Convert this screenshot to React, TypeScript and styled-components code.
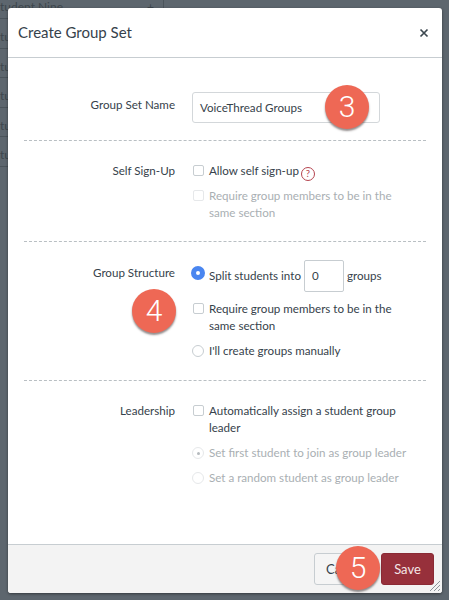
import React from "react";
import styled, { createGlobalStyle } from "styled-components";

const GlobalStyle = createGlobalStyle`
  html, body {
    margin: 0;
    padding: 0;
    background: #5d666e;
  }
  body {
    font-family: Lato, "Open Sans", sans-serif;
    color: #36424b;
  }
`;

const Page = styled.div`
  position: relative;
  width: 449px;
  height: 600px;
  overflow: hidden;
  background: #5d666e;
`;

const BackRow = styled.div`
  height: 29.5px;
  box-sizing: border-box;
  width: 100%;
  border-bottom: 1px solid #4b545b;
  color: #3d464d;
  font-size: 12px;
  line-height: 14px;
  padding-top: 11px;
  white-space: nowrap;
  overflow: hidden;
`;

const FirstBackRow = styled(BackRow)`
  height: 19px;
  padding: 0 9px 0 0;
  display: flex;
  justify-content: space-between;
`;

const BackTable = styled.div`
  width: 163px;
  height: 190px;
  border-right: 1px solid #4b545b;
`;

const Dialog = styled.div`
  position: absolute;
  left: 8px;
  top: 8px;
  width: 434px;
  height: 585px;
  display: flex;
  flex-direction: column;
  background: #ffffff;
  border-radius: 3px;
  box-shadow: 0 1px 3px rgba(0, 0, 0, 0.45);
`;

const Header = styled.div`
  height: 50px;
  flex: none;
  display: flex;
  align-items: center;
  justify-content: space-between;
  box-sizing: border-box;
  padding: 0 13px 2px 10px;
  border-bottom: 1px solid #c7cdd1;
`;

const Title = styled.h1`
  margin: 0;
  font-size: 15px;
  font-weight: 400;
  color: #36424b;
`;

const CloseGlyph = styled.svg`
  margin-top: 2px;
`;

const Body = styled.div`
  flex: 1;
  padding: 34px 16px 0;
`;

const Section = styled.div<{ $height: number }>`
  display: grid;
  grid-template-columns: 151px 1fr;
  column-gap: 16px;
  height: ${({ $height }) => $height}px;
  box-sizing: border-box;
  border-bottom: 1px dashed #b9bfc3;
  align-content: start;
`;

const LastSection = styled(Section)`
  border-bottom: none;
`;

const Label = styled.div<{ $top: number }>`
  text-align: right;
  font-size: 11.6px;
  line-height: 16px;
  padding-top: ${({ $top }) => $top}px;
  color: #36424b;
`;

const Controls = styled.div<{ $top: number }>`
  display: flex;
  flex-direction: column;
  padding-top: ${({ $top }) => $top}px;
`;

const Option = styled.div<{ $gap?: number; $disabled?: boolean }>`
  display: flex;
  align-items: flex-start;
  margin-top: ${({ $gap }) => $gap ?? 0}px;
  font-size: 11.6px;
  line-height: 16.5px;
  color: ${({ $disabled }) => ($disabled ? "#a9afb3" : "#36424b")};
`;

const OptionText = styled.div`
  margin-left: 5px;
  width: 198px;
`;

const WideOptionText = styled(OptionText)`
  width: 216px;
`;

const Box = styled.span<{ $disabled?: boolean }>`
  flex: none;
  width: 9px;
  height: 9px;
  margin: 2px 0 0 2px;
  border: 1px solid ${({ $disabled }) => ($disabled ? "#e6e8ea" : "#c7cdd1")};
  border-radius: 2px;
  background: #fff;
`;

const Radio = styled.span<{ $disabled?: boolean }>`
  flex: none;
  width: 10px;
  height: 10px;
  margin: 2px 0 0 1px;
  border: 1px solid ${({ $disabled }) => ($disabled ? "#e6e8ea" : "#c7cdd1")};
  border-radius: 50%;
  background: #fff;
  display: flex;
  align-items: center;
  justify-content: center;
`;

const RadioOn = styled.span`
  display: block;
  flex: none;
  box-sizing: border-box;
  width: 14px;
  height: 14px;
  margin: -7px 0 0 0;
  border: 5px solid #4a86f0;
  border-radius: 50%;
  background: #fff;
`;

const Dot = styled.span`
  width: 3px;
  height: 3px;
  border-radius: 50%;
  background: #b5babe;
`;

const NameInput = styled.div`
  width: 188px;
  height: 31px;
  box-sizing: border-box;
  border: 1px solid #d3d7da;
  border-radius: 3px;
  padding-left: 7px;
  font-size: 11.6px;
  line-height: 29px;
  margin-left: 1px;
`;

const CountInput = styled.span`
  display: block;
  width: 40px;
  height: 32px;
  box-sizing: border-box;
  border: 1px solid #c7cdd1;
  border-radius: 2px;
  padding-left: 7px;
  margin: 0 3px 0 3px;
  line-height: 30px;
`;

const SplitRow = styled.div`
  display: flex;
  align-items: center;
  font-size: 11.6px;
  line-height: 14px;
`;

const SplitText = styled.span`
  margin-left: 4px;
`;

const Help = styled.span`
  display: inline-flex;
  align-items: center;
  justify-content: center;
  width: 12px;
  height: 12px;
  margin-left: 2px;
  border: 1px solid #b5444f;
  border-radius: 50%;
  color: #b5444f;
  font-size: 9.5px;
  line-height: 12px;
  vertical-align: -2px;
`;

const Footer = styled.div`
  height: 49px;
  flex: none;
  position: relative;
  display: flex;
  justify-content: flex-end;
  align-items: center;
  gap: 8px;
  box-sizing: border-box;
  padding-right: 8px;
  background: #f3f3f3;
  border-top: 1px solid #c7cdd1;
  border-radius: 0 0 3px 3px;
`;

const CancelButton = styled.button`
  width: 59px;
  height: 32px;
  box-sizing: border-box;
  padding: 0 0 0 11px;
  text-align: left;
  font: inherit;
  font-size: 13px;
  color: #36424b;
  background: #f5f5f5;
  border: 1px solid #c7cdd1;
  border-radius: 3px;
`;

const SaveButton = styled.button`
  width: 53px;
  height: 32px;
  padding: 0;
  font: inherit;
  font-size: 13px;
  color: #f4e6e7;
  background: #97303b;
  border: 1px solid #8a2a35;
  border-radius: 3px;
`;

const Grip = styled.svg`
  position: absolute;
  right: 1px;
  bottom: 1px;
`;

const Badge = styled.div<{ $x: number; $y: number }>`
  position: absolute;
  left: ${({ $x }) => $x - 22}px;
  top: ${({ $y }) => $y - 22}px;
  width: 44px;
  height: 44px;
  border-radius: 50%;
  background: #ee6855;
  color: #fff;
  font-family: Roboto, "Liberation Sans", sans-serif;
  font-weight: 300;
  font-size: 30px;
  line-height: 44px;
  text-align: center;
  box-shadow: 0 2px 2px rgba(60, 50, 50, 0.55);
`;

const CloseIcon = () => (
  <CloseGlyph width="10" height="10" viewBox="0 0 10 10">
    <path d="M1.5 1.5l7 7M8.5 1.5l-7 7" stroke="#3d4850" strokeWidth="1.7" />
  </CloseGlyph>
);

const backRows = ["tu", "tu", "tu", "tu", "tu"];

export default function App() {
  return (
    <Page>
      <GlobalStyle />
      <BackTable>
        <FirstBackRow>
          <span>tudent Nine</span>
          <span>+</span>
        </FirstBackRow>
        {backRows.map((row, i) => (
          <BackRow key={i}>{row}</BackRow>
        ))}
      </BackTable>
      <Dialog>
        <Header>
          <Title>Create Group Set</Title>
          <CloseIcon />
        </Header>
        <Body>
          <Section $height={49}>
            <Label $top={5}>Group Set Name</Label>
            <Controls $top={0}>
              <NameInput>VoiceThread Groups</NameInput>
            </Controls>
          </Section>
          <Section $height={101}>
            <Label $top={22}>Self Sign-Up</Label>
            <Controls $top={22}>
              <Option>
                <Box />
                <OptionText>
                  Allow self sign-up<Help>?</Help>
                </OptionText>
              </Option>
              <Option $gap={7} $disabled>
                <Box $disabled />
                <OptionText>Require group members to be in the same section</OptionText>
              </Option>
            </Controls>
          </Section>
          <Section $height={139}>
            <Label $top={23}>Group Structure</Label>
            <Controls $top={18}>
              <SplitRow>
                <RadioOn />
                <SplitText>Split students into</SplitText>
                <CountInput>0</CountInput>
                <span>groups</span>
              </SplitRow>
              <Option $gap={9}>
                <Box />
                <OptionText>Require group members to be in the same section</OptionText>
              </Option>
              <Option $gap={9}>
                <Radio />
                <OptionText>I'll create groups manually</OptionText>
              </Option>
            </Controls>
          </Section>
          <LastSection $height={150}>
            <Label $top={22}>Leadership</Label>
            <Controls $top={22}>
              <Option>
                <Box />
                <OptionText>Automatically assign a student group leader</OptionText>
              </Option>
              <Option $gap={9} $disabled>
                <Radio $disabled>
                  <Dot />
                </Radio>
                <WideOptionText>Set first student to join as group leader</WideOptionText>
              </Option>
              <Option $gap={8} $disabled>
                <Radio $disabled />
                <WideOptionText>Set a random student as group leader</WideOptionText>
              </Option>
            </Controls>
          </LastSection>
        </Body>
        <Footer>
          <CancelButton>Cancel</CancelButton>
          <SaveButton>Save</SaveButton>
          <Grip width="12" height="12" viewBox="0 0 12 12">
            <path d="M1 11L11 1M5 11l6-6M9 11l2-2" stroke="#8d959b" strokeWidth="1" />
          </Grip>
        </Footer>
      </Dialog>
      <Badge $x={347} $y={107}>3</Badge>
      <Badge $x={154} $y={311}>4</Badge>
      <Badge $x={358} $y={568}>5</Badge>
    </Page>
  );
}
